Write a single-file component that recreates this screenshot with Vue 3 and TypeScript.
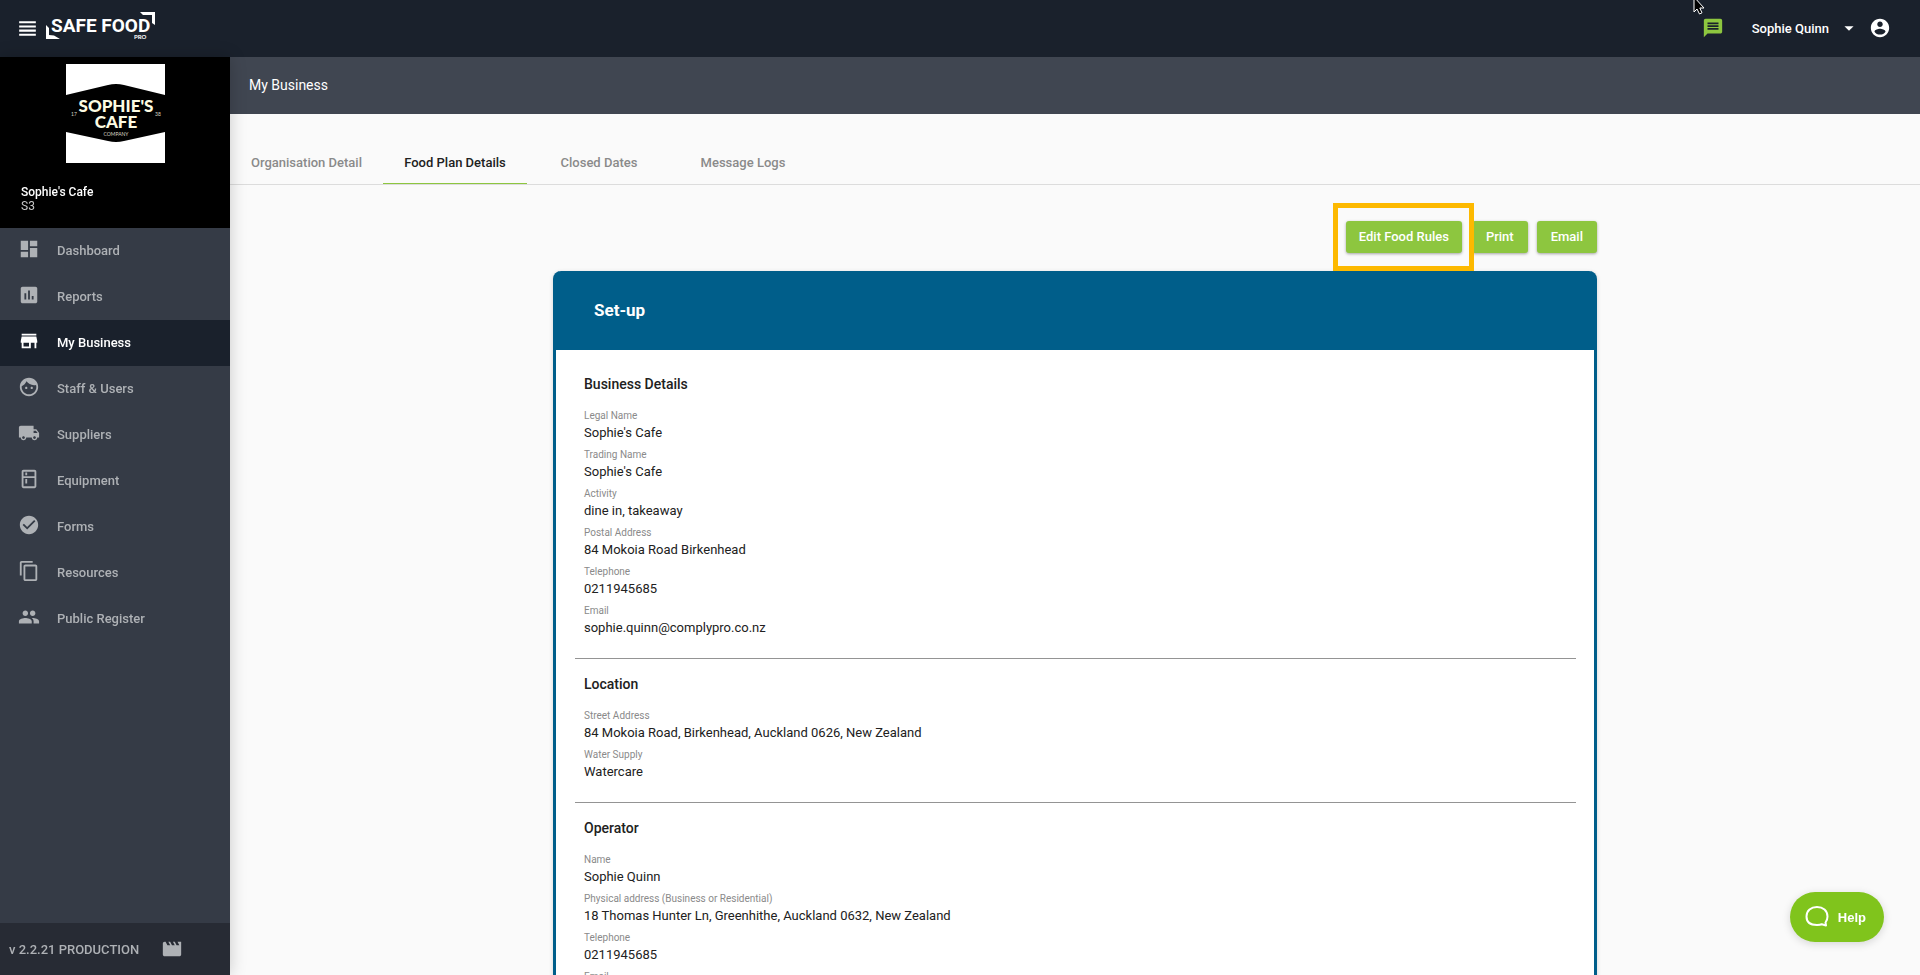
<script setup lang="ts">
import { ref } from 'vue'

interface NavItem {
  label: string
  icon: string
}
interface Field {
  label: string
  value: string
}
interface Section {
  title: string
  fields: Field[]
}

const nav: NavItem[] = [
  { label: 'Dashboard', icon: 'M3 13h8V3H3v10zm0 8h8v-6H3v6zm10 0h8V11h-8v10zm0-18v6h8V3h-8z' },
  {
    label: 'Reports',
    icon: 'M19 3H5c-1.1 0-2 .9-2 2v14c0 1.1.9 2 2 2h14c1.1 0 2-.9 2-2V5c0-1.1-.9-2-2-2zM9 17H7v-7h2v7zm4 0h-2V7h2v10zm4 0h-2v-4h2v4z',
  },
  { label: 'My Business', icon: 'M20 4H4v2h16V4zm1 10v-2l-1-5H4l-1 5v2h1v6h10v-6h4v6h2v-6h1zm-9 4H6v-4h6v4z' },
  {
    label: 'Staff & Users',
    icon: 'M9 11.75c-.69 0-1.25.56-1.25 1.25s.56 1.25 1.25 1.25 1.25-.56 1.25-1.25-.56-1.25-1.25-1.25zm6 0c-.69 0-1.25.56-1.25 1.25s.56 1.25 1.25 1.25 1.25-.56 1.25-1.25-.56-1.25-1.25-1.25zM12 2C6.48 2 2 6.48 2 12s4.48 10 10 10 10-4.48 10-10S17.52 2 12 2zm0 18c-4.41 0-8-3.59-8-8 0-.29.02-.58.05-.86 2.36-1.05 4.23-2.98 5.21-5.37C11.07 8.33 14.05 10 17.42 10c.78 0 1.53-.09 2.25-.26.21.71.33 1.47.33 2.26 0 4.41-3.59 8-8 8z',
  },
  {
    label: 'Suppliers',
    icon: 'M20 8h-3V4H3c-1.1 0-2 .9-2 2v11h2c0 1.66 1.34 3 3 3s3-1.34 3-3h6c0 1.66 1.34 3 3 3s3-1.34 3-3h2v-5l-3-4zM6 18.5c-.83 0-1.5-.67-1.5-1.5s.67-1.5 1.5-1.5 1.5.67 1.5 1.5-.67 1.5-1.5 1.5zm13.5-9l1.96 2.5H17V9.5h2.5zm-1.5 9c-.83 0-1.5-.67-1.5-1.5s.67-1.5 1.5-1.5 1.5.67 1.5 1.5-.67 1.5-1.5 1.5z',
  },
  {
    label: 'Equipment',
    icon: 'M8 5h2v3H8zm0 7h2v5H8zm10-9.99L6 2c-1.1 0-2 .89-2 2v16c0 1.1.9 2 2 2h12c1.1 0 2-.9 2-2V4c0-1.11-.9-1.99-2-1.99zM18 20H6v-9.02h12V20zm0-11H6V4h12v5z',
  },
  {
    label: 'Forms',
    icon: 'M12 2C6.48 2 2 6.48 2 12s4.48 10 10 10 10-4.48 10-10S17.52 2 12 2zm-2 15l-5-5 1.41-1.41L10 14.17l7.59-7.59L19 8l-9 9z',
  },
  {
    label: 'Resources',
    icon: 'M16 1H4c-1.1 0-2 .9-2 2v14h2V3h12V1zm3 4H8c-1.1 0-2 .9-2 2v14c0 1.1.9 2 2 2h11c1.1 0 2-.9 2-2V7c0-1.1-.9-2-2-2zm0 16H8V7h11v14z',
  },
  {
    label: 'Public Register',
    icon: 'M16 11c1.66 0 2.99-1.34 2.99-3S17.66 5 16 5c-1.66 0-3 1.34-3 3s1.34 3 3 3zm-8 0c1.66 0 2.99-1.34 2.99-3S9.66 5 8 5C6.34 5 5 6.34 5 8s1.34 3 3 3zm0 2c-2.33 0-7 1.17-7 3.5V19h14v-2.5c0-2.33-4.67-3.5-7-3.5zm8 0c-.29 0-.62.02-.97.05 1.16.84 1.97 1.97 1.97 3.45V19h6v-2.5c0-2.33-4.67-3.5-7-3.5z',
  },
]
const activeNav = ref('My Business')

const tabs: string[] = ['Organisation Detail', 'Food Plan Details', 'Closed Dates', 'Message Logs']
const activeTab = ref('Food Plan Details')

const sections: Section[] = [
  {
    title: 'Business Details',
    fields: [
      { label: 'Legal Name', value: "Sophie's Cafe" },
      { label: 'Trading Name', value: "Sophie's Cafe" },
      { label: 'Activity', value: 'dine in, takeaway' },
      { label: 'Postal Address', value: '84 Mokoia Road Birkenhead' },
      { label: 'Telephone', value: '0211945685' },
      { label: 'Email', value: 'sophie.quinn@complypro.co.nz' },
    ],
  },
  {
    title: 'Location',
    fields: [
      { label: 'Street Address', value: '84 Mokoia Road, Birkenhead, Auckland 0626, New Zealand' },
      { label: 'Water Supply', value: 'Watercare' },
    ],
  },
  {
    title: 'Operator',
    fields: [
      { label: 'Name', value: 'Sophie Quinn' },
      { label: 'Physical address (Business or Residential)', value: '18 Thomas Hunter Ln, Greenhithe, Auckland 0632, New Zealand' },
      { label: 'Telephone', value: '0211945685' },
      { label: 'Email', value: 'sophie.quinn@complypro.co.nz' },
    ],
  },
]
</script>

<template>
  <div class="shell">
    <header class="topbar">
      <button class="icon-btn menu" type="button" aria-label="Menu">
        <svg class="icon-lg" viewBox="0 0 24 24"><path d="M4 15h16v-2H4v2zm0 4h16v-2H4v2zm0-8h16V9H4v2zm0-6v2h16V5H4z" /></svg>
      </button>
      <a class="brand" href="#" aria-label="Safe Food Pro">
        <svg width="110" height="28" viewBox="0 0 110 28">
          <path d="M0 13l3 3v7l5 .5 6 3.500H0z" />
          <path d="M94 0h15v13l-3-2V3h-9z" />
          <text class="brand-name" x="5" y="20">SAFE FOOD</text>
          <text class="brand-pro" x="88" y="27">PRO</text>
        </svg>
      </a>
      <div class="user-area">
        <button class="icon-btn chat" type="button" aria-label="Messages">
          <svg class="icon" viewBox="0 0 24 24"><path d="M20 2H4c-1.1 0-1.99.9-1.99 2L2 22l4-4h14c1.1 0 2-.9 2-2V4c0-1.1-.9-2-2-2zm-2 12H6v-2h12v2zm0-3H6V9h12v2zm0-3H6V6h12v2z" /></svg>
        </button>
        <button class="user" type="button">
          <span>Sophie Quinn</span>
          <svg class="icon" viewBox="0 0 24 24"><path d="M7 10l5 5 5-5z" /></svg>
        </button>
        <button class="icon-btn" type="button" aria-label="Account">
          <svg class="icon" viewBox="0 0 24 24"><path d="M12 2C6.48 2 2 6.480 2 12s4.480 10 10 10 10-4.480 10-10S17.520 2 12 2zm0 3c1.660 0 3 1.340 3 3s-1.340 3-3 3-3-1.340-3-3 1.340-3 3-3zm0 14.200c-2.500 0-4.710-1.280-6-3.220.030-1.990 4-3.080 6-3.080 1.990 0 5.970 1.090 6 3.080-1.290 1.940-3.500 3.220-6 3.220z" /></svg>
        </button>
      </div>
    </header>

    <div class="body">
      <aside class="sidebar">
        <div class="business">
          <svg class="business-logo" viewBox="0 0 99 99" role="img" aria-label="Sophie's Cafe Company">
            <rect width="99" height="99" fill="#fff" />
            <path d="M0 31L42 21q8-2 16 0L99 31v37L58 77q-8 2-16 0L0 68z" fill="#000" />
            <text class="logo-title" x="50" y="48">SOPHIE'S</text>
            <text class="logo-title" x="50" y="64">CAFE</text>
            <text class="logo-tiny" x="8" y="52">17</text>
            <text class="logo-tiny" x="92" y="52">38</text>
            <text class="logo-tiny" x="50" y="72">COMPANY</text>
          </svg>
          <strong class="business-name">Sophie's Cafe</strong>
          <span class="business-code">S3</span>
        </div>
        <nav class="nav">
          <a
            v-for="item in nav"
            :key="item.label"
            href="#"
            class="nav-item"
            :class="{ active: item.label === activeNav }"
            @click.prevent="activeNav = item.label"
          >
            <svg class="icon" viewBox="0 0 24 24"><path :d="item.icon" /></svg>
            <span>{{ item.label }}</span>
          </a>
        </nav>
        <footer class="version">
          <span>v 2.2.21 PRODUCTION</span>
          <svg class="icon" viewBox="0 0 24 24"><path d="M18 4l2 4h-3l-2-4h-2l2 4h-3l-2-4H8l2 4H7L5 4H4c-1.100 0-1.990.900-1.990 2L2 18c0 1.100.900 2 2 2h16c1.100 0 2-.900 2-2V4h-4z" /></svg>
        </footer>
      </aside>

      <main class="main">
        <h1 class="page-title">My Business</h1>
        <div class="tabs" role="tablist">
          <button
            v-for="tab in tabs"
            :key="tab"
            type="button"
            role="tab"
            class="tab"
            :class="{ active: tab === activeTab }"
            :aria-selected="tab === activeTab"
            @click="activeTab = tab"
          >
            {{ tab }}
          </button>
        </div>

        <div class="content">
          <div class="actions">
            <div class="highlighted">
              <button class="btn" type="button">Edit Food Rules</button>
            </div>
            <button class="btn" type="button">Print</button>
            <button class="btn" type="button">Email</button>
          </div>

          <article class="card">
            <h2 class="card-head">Set-up</h2>
            <div class="card-body">
              <section v-for="section in sections" :key="section.title" class="section">
                <h3>{{ section.title }}</h3>
                <dl>
                  <div v-for="field in section.fields" :key="field.label" class="field">
                    <dt>{{ field.label }}</dt>
                    <dd>{{ field.value }}</dd>
                  </div>
                </dl>
              </section>
            </div>
          </article>
        </div>
      </main>
    </div>

    <button class="help" type="button">
      <svg width="24" height="24" viewBox="0 0 24 24">
        <path d="M20.500 17.500c1.200-1.500 2-3.500 2-6C22.500 5.500 18 2 12 2S1.500 5.500 1.500 11.500 6 20 12 20c1.800 0 3.500 0 4.800-.8l4.200 1.300z" />
      </svg>
      <span>Help</span>
    </button>

    <svg class="cursor" width="14" height="18" viewBox="0 0 14 18">
      <path d="M2-3v15l3-3 2.500 5 2.500-1.200L7.800 8H12z" />
    </svg>
  </div>
</template>

<style>
body {
  margin: 0;
  background: #fafafa;
}
</style>

<style scoped>
.shell {
  display: flex;
  flex-direction: column;
  height: 100vh;
  overflow: hidden;
  font-family: Roboto, "Liberation Sans", sans-serif;
  font-size: 13px;
  color: #212121;
}
button {
  font: inherit;
  color: inherit;
  background: none;
  border: 0;
  padding: 0;
  cursor: pointer;
}
a {
  color: inherit;
  text-decoration: none;
}
h1,
h2,
h3,
dl,
dd {
  margin: 0;
}
.icon {
  width: 22px;
  height: 22px;
  fill: currentColor;
  flex: none;
}
.icon-lg {
  width: 25px;
  height: 25px;
  fill: currentColor;
}
.icon-btn {
  display: flex;
}

.topbar {
  flex: none;
  display: flex;
  align-items: center;
  height: 56px;
  padding: 0 29px 1px 15px;
  background: #1a212c;
  color: #fff;
}
.brand {
  display: flex;
  margin: 0 0 4px 6px;
}
.brand svg {
  fill: #fff;
}
.brand-name {
  font: 700 19px Roboto, sans-serif;
}
.brand-pro {
  font: 700 6px Lato, sans-serif;
}
.user-area {
  display: flex;
  align-items: center;
  margin-left: auto;
}
.chat {
  color: #8dc63f;
  margin-right: 28px;
}
.user {
  display: flex;
  align-items: center;
  gap: 9px;
  margin-right: 9px;
  font-weight: 500;
}

.body {
  flex: 1;
  display: flex;
  min-height: 0;
}
.sidebar {
  flex: none;
  display: flex;
  flex-direction: column;
  width: 230px;
  background: #353b46;
  color: #aeb1b5;
  font-weight: 500;
  box-shadow: 0 0 16px rgba(0, 0, 0, 0.2);
  z-index: 1;
}
.business {
  display: flex;
  flex-direction: column;
  height: 171px;
  box-sizing: border-box;
  padding: 7px 21px 0;
  background: #000;
  color: #fff;
}
.business-logo {
  width: 99px;
  height: 99px;
  align-self: center;
  margin-bottom: 22px;
}
.logo-title {
  font: 900 17px Lato, sans-serif;
  fill: #fdfbe2;
  text-anchor: middle;
}
.logo-tiny {
  font: 400 5px Lato, sans-serif;
  fill: #d8d6c4;
  text-anchor: middle;
}
.business-name {
  font-size: 12px;
  line-height: 14px;
  font-weight: 500;
}
.business-code {
  font-size: 12px;
  line-height: 14px;
  font-weight: 400;
  color: #c8c8c8;
}
.nav {
  flex: 1;
}
.nav-item {
  display: flex;
  align-items: center;
  gap: 17px;
  height: 46px;
  padding: 0 0 2px 18px;
  box-sizing: border-box;
}
.nav-item .icon {
  margin-bottom: 2px;
}
.nav-item.active {
  background: #1a212c;
  color: #fff;
}
.version {
  display: flex;
  align-items: center;
  gap: 22px;
  height: 52px;
  padding-left: 9px;
  background: #272b34;
}

.main {
  flex: 1;
  min-width: 0;
  display: flex;
  flex-direction: column;
  overflow-y: auto;
  scrollbar-width: none;
  background: #fafafa;
}
.page-title {
  flex: none;
  padding-left: 19px;
  background: #404651;
  color: #fff;
  font-size: 14px;
  font-weight: 400;
  line-height: 57px;
}
.tabs {
  flex: none;
  display: flex;
  margin-top: 23px;
  border-bottom: 1px solid #dcdcdc;
}
.tab {
  min-width: 144px;
  height: 47px;
  padding: 4px 21px 0;
  border-bottom: 1px solid transparent;
  font-weight: 500;
  color: #8a8a8a;
}
.tab.active {
  color: #212121;
  border-color: #8dc63f;
}

.content {
  width: 100%;
  max-width: 1044px;
  margin: 0 auto;
}
.actions {
  display: flex;
  align-items: center;
  justify-content: flex-end;
  gap: 9px;
  padding-top: 18px;
}
.highlighted {
  position: relative;
  z-index: 1;
  margin-right: -11px;
  padding: 13px 7px 13px 8px;
  border: 5px solid #fdb900;
}
.btn {
  display: block;
  height: 32px;
  padding: 0 14px 1px;
  border-radius: 3px;
  background: #8dc63f;
  color: #fff;
  font-weight: 500;
  box-shadow: 0 1px 3px rgba(0, 0, 0, 0.35);
}
.highlighted .btn {
  padding: 0 13px 1px;
}

.card {
  border: solid #005e8a;
  border-width: 0 3px;
  border-radius: 8px 8px 0 0;
  background: #fff;
  box-shadow: 0 1px 4px rgba(0, 0, 0, 0.15);
}
.card-head {
  padding-left: 39px;
  margin: 0 -1px;
  border-radius: 6px 6px 0 0;
  background: #005e8a;
  color: #fff;
  font-size: 17px;
  font-weight: 700;
  line-height: 79px;
}
.card-body {
  padding: 10px 18px 0 19px;
}
.section {
  padding: 12px 9px 15px;
}
.section + .section {
  padding-top: 13px;
  border-top: 1px solid #949494;
}
h3 {
  font-size: 14px;
  font-weight: 500;
  line-height: 24px;
  margin-bottom: 13px;
}
.field {
  margin-bottom: 6px;
}
dt {
  font-size: 10px;
  line-height: 14px;
  color: #8a8a8a;
}
dd {
  line-height: 19px;
}

.help {
  position: fixed;
  right: 36px;
  bottom: 33px;
  z-index: 2;
  display: flex;
  align-items: center;
  gap: 9px;
  height: 50px;
  padding: 0 18px 0 15px;
  border-radius: 25px;
  background: #80c41c;
  color: #fff;
  font: 700 13px "Liberation Sans", sans-serif;
  box-shadow: 0 2px 8px rgba(0, 0, 0, 0.15);
}
.help path {
  fill: none;
  stroke: #fff;
  stroke-width: 2;
  stroke-linejoin: round;
}
.cursor {
  position: fixed;
  top: 0;
  right: 214px;
  z-index: 3;
  fill: #000;
  stroke: #fff;
}
</style>
